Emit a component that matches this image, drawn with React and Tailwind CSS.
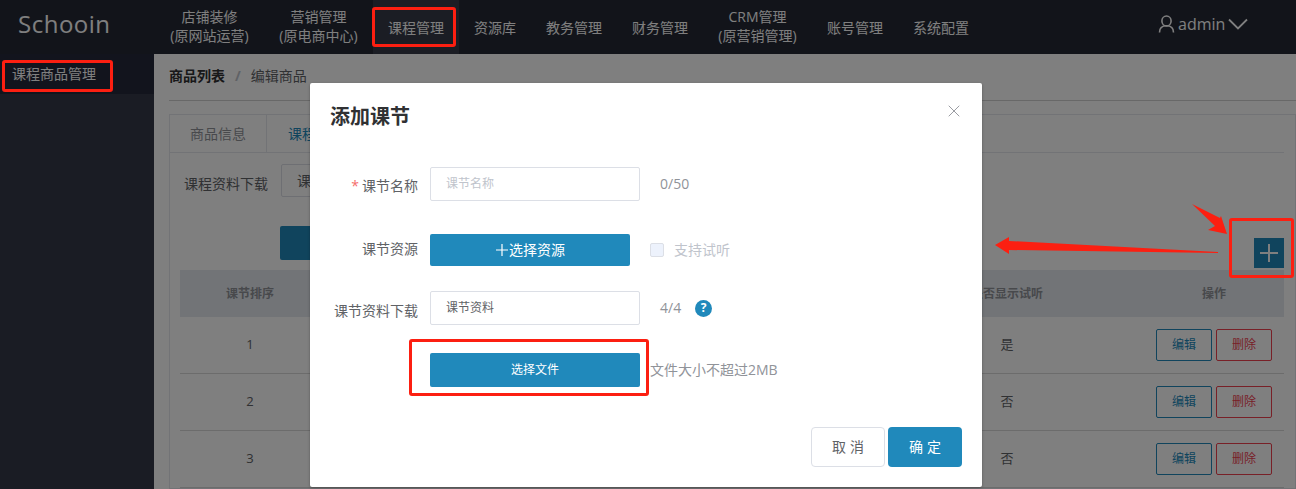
import { X } from "lucide-react";

const FONT = "font-['Open_Sans','Noto_Sans_CJK_SC',sans-serif]";

const navItems = [
  { lines: ["店铺装修", "(原网站运营)"] },
  { lines: ["营销管理", "(原电商中心)"] },
  { lines: ["课程管理"], active: true },
  { lines: ["资源库"] },
  { lines: ["教务管理"] },
  { lines: ["财务管理"] },
  { lines: ["CRM管理", "(原营销管理)"] },
  { lines: ["账号管理"] },
  { lines: ["系统配置"] },
];

const rows = [
  { order: 1, trial: "是" },
  { order: 2, trial: "否" },
  { order: 3, trial: "否" },
];

function TopBar() {
  return (
    <header className="flex h-[54px] shrink-0 items-stretch bg-[#242834] text-white">
      <div className="flex w-[155px] items-center pb-[6px] pl-[18px] text-2xl tracking-[0.5px]">Schooin</div>
      <nav className="flex items-stretch">
        {navItems.map((item) => (
          <div
            key={item.lines[0]}
            className={`flex flex-col items-center justify-center px-[15px] text-sm leading-[19px] ${
              item.lines.length > 1 ? "min-w-[109px] pb-[2px]" : ""
            } ${item.active ? "bg-[#363a48]" : ""}`}
          >
            {item.lines.map((line) => (
              <span key={line}>{line}</span>
            ))}
          </div>
        ))}
      </nav>
      <div className="ml-[174px] flex items-center gap-[3px] pb-[7px] text-base">
        <svg width="17" height="18" viewBox="0 0 17 18" fill="none" stroke="currentColor" strokeWidth="1.6">
          <ellipse cx="8.5" cy="6" rx="4.6" ry="5" />
          <path d="M1.5 17.5c0-4 2.6-6.7 7-6.7s7 2.7 7 6.7" />
        </svg>
        <span>admin</span>
        <svg width="20" height="12" viewBox="0 0 20 12" fill="none" stroke="currentColor" strokeWidth="1.8">
          <path d="M1 1.5l9 9 9-9" />
        </svg>
      </div>
    </header>
  );
}

function Sidebar() {
  return (
    <aside className="w-[154px] shrink-0 bg-[#343849] text-white">
      <div className="flex h-[40px] items-center bg-[#24283a] pl-3 text-sm">课程商品管理</div>
    </aside>
  );
}

function LessonTable() {
  return (
    <div className="text-[13px] text-[#606266]">
      <div className="grid h-[47px] grid-cols-[140px_1fr_274px_140px] items-center bg-[#e4e8ee] text-center text-xs font-bold text-[#909399]">
        <div>课节排序</div>
        <div />
        <div>是否显示试听</div>
        <div>操作</div>
      </div>
      {rows.map((row) => (
        <div
          key={row.order}
          className="grid h-[57px] grid-cols-[140px_1fr_274px_140px] items-center border-b border-[#d9d9d9] text-center"
        >
          <div>{row.order}</div>
          <div />
          <div>{row.trial}</div>
          <div className="flex justify-center gap-1 text-xs">
            <button className="h-[32px] w-[56px] rounded-[2px] border border-[#2089bb] text-[#2089bb]">编辑</button>
            <button className="h-[32px] w-[56px] rounded-[2px] border border-[#f0414f] text-[#f0414f]">删除</button>
          </div>
        </div>
      ))}
    </div>
  );
}

function Page() {
  return (
    <main className="min-w-0 flex-1 bg-white pl-[15px]">
      <div className="flex h-[47px] items-center border-b border-[#d0d0d0] pb-[2px] text-sm">
        <span className="font-bold text-[#303133]">商品列表</span>
        <span className="mx-[10px] font-bold text-[#c0c4cc]">/</span>
        <span className="text-[#606266]">编辑商品</span>
      </div>
      <div className="mt-[13px] border border-[#e4e7ed] pr-[11px] pl-[10px]">
        <div className="-ml-[10px] flex h-[38px] border-b border-[#e4e7ed] text-sm">
          <div className="flex w-[97px] items-center justify-center border-r border-[#e4e7ed] text-[#909399]">
            商品信息
          </div>
          <div className="flex items-center pl-[21px] text-[#2089bb]">课程</div>
        </div>
        <div className="mt-[11px] flex h-[33px] items-center pl-[4px] text-sm text-[#606266]">
          <span className="pt-[7px]">课程资料下载</span>
          {/* the dialog covers most of this field, only the start of the value shows */}
          <div className="ml-[13px] flex h-[33px] w-[210px] items-center rounded-[2px] border border-[#dcdfe6] pl-[15px]">
            课程
          </div>
        </div>
        <div className="mt-[29px] flex h-[34px] items-start pl-[100px]">
          <div className="h-[34px] w-[210px] rounded-[2px] bg-[#2089bb]" />
        </div>
        <div className="mt-[10px]">
          <div className="flex justify-end">
            <div className="-mt-[32px] flex h-[30px] w-[30px] items-center justify-center bg-[#2089bb] text-white">
              <svg width="20" height="20" viewBox="0 0 20 20" stroke="currentColor" strokeWidth="2">
                <path d="M10 1v18M1 10h18" />
              </svg>
            </div>
          </div>
          <LessonTable />
        </div>
      </div>
    </main>
  );
}

function FormLabel({ children, required, className = "" }) {
  return (
    <div className={`flex w-[108px] shrink-0 justify-end gap-[3px] text-sm text-[#606266] ${className}`}>
      {required && <span className="text-[#f56c6c]">*</span>}
      <span>{children}</span>
    </div>
  );
}

function Dialog() {
  return (
    <section className="absolute top-[83px] left-[310px] h-[404px] w-[672px] rounded-[2px] bg-white shadow-[0_1px_3px_rgba(0,0,0,0.3)]">
      <div className="flex h-[66px] items-center justify-between pr-[18px] pl-5">
        <h2 className="pt-[2px] text-xl font-bold text-[#303133]">添加课节</h2>
        <X size={20} strokeWidth={1.1} className="-mt-[10px] text-[#909399]" />
      </div>
      <div className="mt-[18px] flex h-[34px] items-center gap-3">
        <FormLabel required className="pt-[4px]">
          课节名称
        </FormLabel>
        <div className="flex h-[34px] w-[210px] items-center rounded-[2px] border border-[#dcdfe6] pl-[15px] text-xs text-[#c0c4cc]">
          课节名称
        </div>
        <span className="ml-2 text-sm text-[#909399]">0/50</span>
      </div>
      <div className="mt-[33px] flex h-[32px] items-center gap-3">
        <FormLabel className="pb-[2px]">课节资源</FormLabel>
        <button className="flex h-[32px] w-[200px] items-center justify-center rounded-[2px] bg-[#2089bb] text-sm text-white">
          <svg width="14" height="14" viewBox="0 0 14 14" stroke="currentColor" strokeWidth="1.2">
            <path d="M7 1v12M1 7h12" />
          </svg>
          选择资源
        </button>
        <span className="ml-2 h-[14px] w-[14px] rounded-[2px] border border-[#dcdfe6] bg-[#edf2fc]" />
        <span className="-ml-[2px] text-sm text-[#c0c4cc]">支持试听</span>
      </div>
      <div className="mt-[25px] flex h-[34px] items-center gap-3">
        <FormLabel className="pt-[6px]">课节资料下载</FormLabel>
        <div className="flex h-[34px] w-[210px] items-center rounded-[2px] border border-[#dcdfe6] pl-[15px] text-xs text-[#606266]">
          课节资料
        </div>
        <span className="ml-2 text-sm text-[#909399]">4/4</span>
        <span className="ml-[2px] flex h-[17px] w-[17px] items-center justify-center rounded-full bg-[#2089bb] text-xs font-bold text-white">
          ?
        </span>
      </div>
      <div className="mt-[28px] flex h-[34px] items-center pl-[120px]">
        <button className="h-[34px] w-[210px] rounded-[2px] bg-[#2089bb] text-xs text-white">选择文件</button>
        <span className="ml-[10px] text-sm text-[#909399]">文件大小不超过2MB</span>
      </div>
      <div className="mt-[40px] flex justify-end gap-[3px] pr-5">
        <button className="h-[40px] w-[74px] rounded border border-[#dcdfe6] pl-[4px] text-sm tracking-[4px] text-[#606266]">
          取消
        </button>
        <button className="h-[40px] w-[74px] rounded bg-[#2089bb] pl-[4px] text-sm tracking-[4px] text-white">
          确定
        </button>
      </div>
    </section>
  );
}

function Annotations() {
  return (
    <>
      <div className="absolute top-[7px] left-[372px] h-[40px] w-[84px] rounded-[3px] border-[3px] border-[#fc1f11]" />
      <div className="absolute top-[60px] left-[2px] h-[32px] w-[111px] rounded-[3px] border-[3px] border-[#fc1f11]" />
      <div className="absolute top-[339px] left-[409px] h-[57px] w-[240px] rounded-[3px] border-[3px] border-[#fc1f11]" />
      <div className="absolute top-[218px] left-[1229px] h-[60px] w-[65px] rounded-[3px] border-[3px] border-[#fc1f11]" />
      <svg className="absolute top-[190px] left-[985px]" width="250" height="70" viewBox="985 190 250 70" fill="#fc1f11">
        <polygon points="1192,204 1220,218 1221,216 1227,234 1208,230 1215,226" />
        <polygon points="995,245 1009,237 1009,241 1218,252 1218,253 1009,250 1009,254" />
      </svg>
    </>
  );
}

export default function App() {
  return (
    <div className={`relative h-screen w-full overflow-hidden ${FONT}`}>
      <div className="flex h-full flex-col">
        <TopBar />
        <div className="flex min-h-0 flex-1">
          <Sidebar />
          <Page />
        </div>
      </div>
      <div className="absolute inset-0 bg-black/50" />
      <Dialog />
      <Annotations />
    </div>
  );
}
